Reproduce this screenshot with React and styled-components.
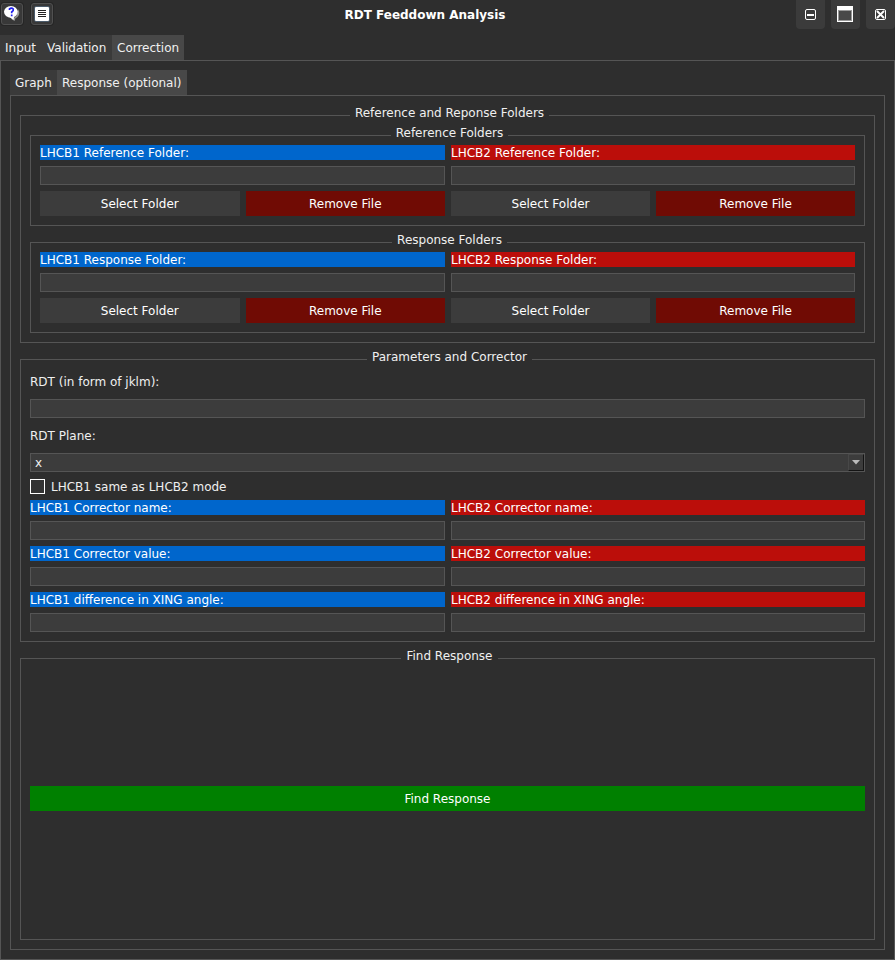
import React from "react";
import styled, { createGlobalStyle } from "styled-components";

const GlobalStyle = createGlobalStyle`
  * { box-sizing: border-box; }
  body {
    margin: 0;
    background: #2e2e2e;
    color: #f0f0f0;
    font: 12px/15px "DejaVu Sans", sans-serif;
  }
`;

const Window = styled.div`
  display: flex;
  flex-direction: column;
  width: 895px;
  height: 960px;
`;

const TitleBar = styled.header`
  display: grid;
  grid-template-columns: 99px 1fr 99px;
  height: 35px;
  flex: none;
`;

const TitleText = styled.h1`
  margin: 0;
  padding: 8px 45px 0 0;
  font-size: 12px;
  line-height: 15px;
  text-align: center;
  color: #fff;
`;

const BarIcons = styled.div`
  display: flex;
  gap: 8px;
  padding: 3px 0 0 1px;
`;

const WindowControls = styled.div`
  display: flex;
  gap: 6px;
`;

const IconButton = styled.button`
  width: 22px;
  height: 22px;
  padding: 0;
  border: 1px solid #505050;
  border-radius: 3px;
  background: #383838;
  box-shadow: 0 0 0 1px #262626;
  svg { display: block; }
`;

const ControlButton = styled.button`
  flex: none;
  width: 29px;
  height: 29px;
  padding: 0;
  border: 0;
  border-radius: 0 0 4px 4px;
  background: #3b3b3b;
  svg { display: block; }
`;

const TabBar = styled.nav`
  display: flex;
  flex: none;
  height: 25px;
`;

const Tab = styled.button`
  width: ${(p) => p.$width}px;
  height: 25px;
  padding: 2px 0 0 5px;
  border: 0;
  font: inherit;
  text-align: left;
  white-space: nowrap;
  color: #f0f0f0;
  background: ${(p) => (p.$active ? "#484848" : "#3a3a3a")};
`;

const Pane = styled.section`
  display: flex;
  flex-direction: column;
  flex: 1;
  min-height: 0;
  gap: ${(p) => p.$gap || 0}px;
  padding: 9px;
  border: 1px solid #555;
`;

const GroupBox = styled.section`
  display: flex;
  flex-direction: column;
  flex: ${(p) => (p.$grow ? 1 : "none")};
  margin-top: 10px;
  padding: 0 9px 9px;
  border: 1px solid #555;
`;

const GroupTitle = styled.h2`
  align-self: center;
  height: 15px;
  margin: -11px 0 5px 4px;
  padding: 0 5px;
  font-size: 12px;
  font-weight: normal;
  line-height: 17px;
  background: #2e2e2e;
`;

const GroupBody = styled.div`
  display: flex;
  flex-direction: column;
  justify-content: ${(p) => (p.$center ? "center" : "flex-start")};
  flex: 1;
  gap: 6px;
  padding-bottom: ${(p) => (p.$center ? 1 : 0)}px;
`;

const BeamColumns = styled.div`
  display: grid;
  grid-template-columns: calc(50% - 2.5px) 1fr;
  gap: 6px;
`;

const ButtonPair = styled.div`
  display: grid;
  grid-template-columns: 1fr 1fr;
  gap: 6px;
`;

const BeamLabel = styled.label`
  height: 15px;
  line-height: 17px;
  color: #fff;
  background: ${(p) => (p.$beam === 1 ? "#0066cc" : "#bb0e0a")};
`;

const FieldLabel = styled.label`
  height: ${(p) => p.$height}px;
  line-height: ${(p) => p.$height + 2}px;
`;

const TextField = styled.input`
  width: 100%;
  height: 19px;
  padding: 0 4px;
  border: 1px solid #555;
  border-radius: 0;
  outline: 0;
  color: #f0f0f0;
  background: #3c3c3c;
  font: inherit;
`;

const buttonColors = { plain: "#3c3c3c", danger: "#700b04", go: "#008000" };

const PushButton = styled.button`
  height: 25px;
  padding: 2px 0 0;
  border: 0;
  font: inherit;
  color: #fff;
  background: ${(p) => buttonColors[p.$kind]};
`;

const ComboBox = styled.div`
  display: flex;
  justify-content: space-between;
  height: 19px;
  padding-left: 4px;
  line-height: 19px;
  border: 1px solid #555;
  background: #3c3c3c;
`;

const ComboArrow = styled.span`
  display: flex;
  width: 16px;
  height: 17px;
  border: 1px solid #484848;
  border-right-color: #141414;
  border-bottom-color: #141414;
`;

const CheckRow = styled.label`
  display: flex;
  align-items: flex-start;
  gap: 6px;
  height: 16px;
  line-height: 19px;
`;

const CheckMark = styled.span`
  width: 15px;
  height: 15px;
  margin-top: 1px;
  border: 1px solid #fff;
  background: #333;
`;

function HelpIcon() {
  return (
    <svg width="20" height="20" viewBox="0 0 20 20">
      <path d="M9 14.500Q16 14 16 5L17.300 8Q17.500 12.500 13.500 14.300L12.500 17L9.500 15z" fill="#999" />
      <ellipse cx="8.900" cy="7.800" rx="6.900" ry="5.900" fill="#fff" />
      <path d="M7.500 13h4.500l-.5 3z" fill="#fff" />
      <path d="M7.500 6V5Q9.500 3.300 11.300 5Q11.800 6.500 9.700 8V9.300M9.700 10.500v1.700" fill="none" stroke="#2020ee" strokeWidth="1.700" />
    </svg>
  );
}

function MenuIcon() {
  return (
    <svg width="20" height="20" viewBox="0 0 20 20">
      <rect x="2.500" y="2.500" width="15" height="15" rx="1.500" fill="none" stroke="#5c7c9c" strokeOpacity="0.5" />
      <rect x="3" y="3" width="14" height="14" rx="1" fill="#fff" />
      <path d="M6 6.500h8M6 8.500h8M6 10.500h8M6 12.500h8" stroke="#222" />
    </svg>
  );
}

function MinimizeIcon() {
  return (
    <svg width="29" height="29" viewBox="0 0 29 29" fill="none" stroke="#fff">
      <rect x="9.500" y="9.500" width="10" height="10" rx="1.500" />
      <path d="M11 15h7" strokeWidth="2" />
    </svg>
  );
}

function MaximizeIcon() {
  return (
    <svg width="29" height="29" viewBox="0 0 29 29" fill="none">
      <rect x="6" y="6" width="16" height="16" fill="#fff" />
      <rect x="7.500" y="10.500" width="13" height="10" fill="#484848" stroke="#999" />
    </svg>
  );
}

function CloseIcon() {
  return (
    <svg width="29" height="29" viewBox="0 0 29 29" fill="none" stroke="#fff">
      <rect x="9.500" y="9.500" width="10" height="10" rx="1.500" />
      <path d="M11 11l7 7M18 11l-7 7" strokeWidth="1.900" />
    </svg>
  );
}

function Group({ title, grow, center, children }) {
  return (
    <GroupBox $grow={grow}>
      <GroupTitle>{title}</GroupTitle>
      <GroupBody $center={center}>{children}</GroupBody>
    </GroupBox>
  );
}

function BeamFields({ name }) {
  return (
    <BeamColumns>
      <BeamLabel $beam={1}>LHCB1 {name}:</BeamLabel>
      <BeamLabel $beam={2}>LHCB2 {name}:</BeamLabel>
      <TextField />
      <TextField />
    </BeamColumns>
  );
}

function FolderButtons() {
  return (
    <ButtonPair>
      <PushButton $kind="plain">Select Folder</PushButton>
      <PushButton $kind="danger">Remove File</PushButton>
    </ButtonPair>
  );
}

function FolderGroup({ kind }) {
  return (
    <Group title={`${kind} Folders`}>
      <BeamFields name={`${kind} Folder`} />
      <BeamColumns>
        <FolderButtons />
        <FolderButtons />
      </BeamColumns>
    </Group>
  );
}

export default function App() {
  return (
    <Window>
      <GlobalStyle />
      <TitleBar>
        <BarIcons>
          <IconButton><HelpIcon /></IconButton>
          <IconButton><MenuIcon /></IconButton>
        </BarIcons>
        <TitleText>RDT Feeddown Analysis</TitleText>
        <WindowControls>
          <ControlButton><MinimizeIcon /></ControlButton>
          <ControlButton><MaximizeIcon /></ControlButton>
          <ControlButton><CloseIcon /></ControlButton>
        </WindowControls>
      </TitleBar>
      <TabBar>
        <Tab $width={42}>Input</Tab>
        <Tab $width={70}>Validation</Tab>
        <Tab $width={72} $active>Correction</Tab>
      </TabBar>
      <Pane>
        <TabBar>
          <Tab $width={47}>Graph</Tab>
          <Tab $width={130} $active>Response (optional)</Tab>
        </TabBar>
        <Pane $gap={6}>
          <Group title="Reference and Reponse Folders">
            <FolderGroup kind="Reference" />
            <FolderGroup kind="Response" />
          </Group>
          <Group title="Parameters and Corrector">
            <FieldLabel $height={24}>RDT (in form of jklm):</FieldLabel>
            <TextField />
            <FieldLabel $height={23}>RDT Plane:</FieldLabel>
            <ComboBox>
              x
              <ComboArrow>
                <svg width="14" height="14" viewBox="0 0 14 14">
                  <path d="M3 5h8L7 9.500z" fill="#bbb" />
                </svg>
              </ComboArrow>
            </ComboBox>
            <CheckRow><CheckMark />LHCB1 same as LHCB2 mode</CheckRow>
            <BeamFields name="Corrector name" />
            <BeamFields name="Corrector value" />
            <BeamFields name="difference in XING angle" />
          </Group>
          <Group title="Find Response" grow center>
            <PushButton $kind="go">Find Response</PushButton>
          </Group>
        </Pane>
      </Pane>
    </Window>
  );
}
